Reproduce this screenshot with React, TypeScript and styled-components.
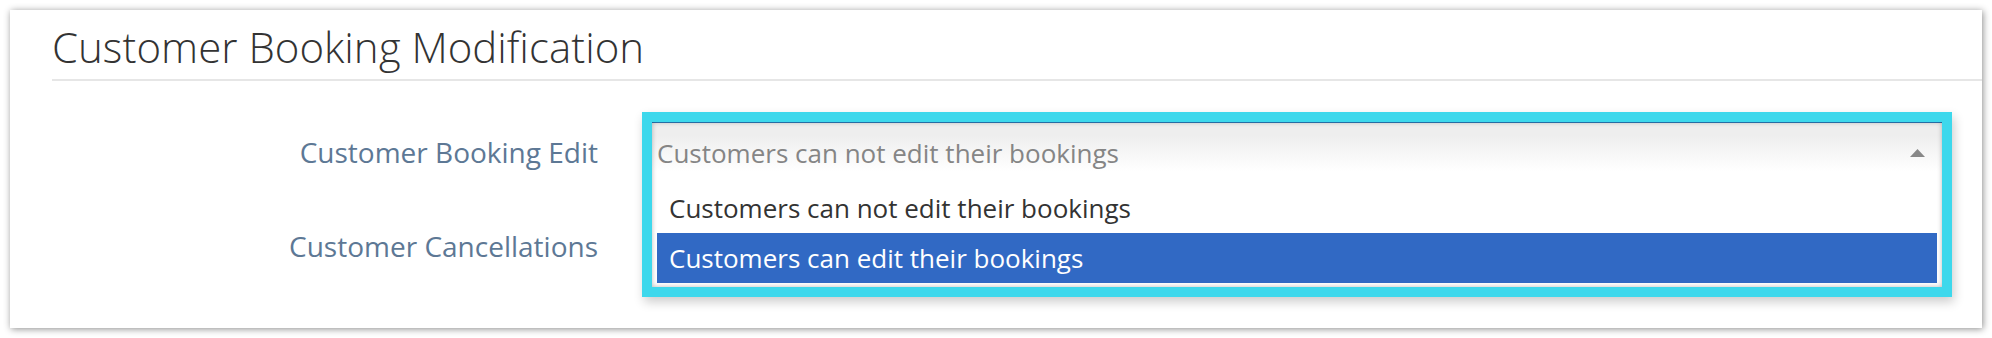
import React from "react";
import styled, { createGlobalStyle } from "styled-components";

const GlobalStyle = createGlobalStyle`
  html, body {
    margin: 0;
    padding: 0;
    background: #ffffff;
  }
  body {
    font-family: "Open Sans", "Liberation Sans", sans-serif;
  }
  * {
    box-sizing: border-box;
  }
`;

const Page = styled.div`
  padding: 10px;
  width: 1992px;
  height: 338px;
`;

const Card = styled.section`
  height: 318px;
  background: #ffffff;
  box-shadow: 1px 1px 7px rgba(0, 0, 0, 0.45);
`;

const Title = styled.h2`
  margin: 0 0 0 42px;
  padding: 14px 0 9px;
  font-family: "Open Sans Light", "Open Sans", "Liberation Sans", sans-serif;
  font-size: 42px;
  line-height: 46px;
  font-weight: 300;
  color: #333333;
  border-bottom: 2px solid #e6e6e6;
`;

const Form = styled.div`
  margin-top: 31px;
  padding-right: 30px;
`;

const Row = styled.div`
  display: grid;
  grid-template-columns: 588px 1fr;
  column-gap: 44px;
  min-height: 94px;
  align-items: start;
`;

const Label = styled.label`
  padding-top: 20px;
  font-size: 28px;
  line-height: 40px;
  color: #5d7895;
  text-align: right;
`;

const Field = styled.div`
  position: relative;
`;

const OpenSelect = styled.div`
  position: absolute;
  top: 0;
  left: 0;
  right: 0;
  z-index: 2;
  border: 10px solid #3dd8ec;
  background: #ffffff;
  box-shadow: 2px 5px 10px rgba(0, 0, 0, 0.2);
  &::after {
    content: "";
    position: absolute;
    inset: 0;
    pointer-events: none;
    box-shadow: inset 0 0 5px rgba(0, 0, 0, 0.28);
  }
`;

const SingleHeader = styled.div<{ $open?: boolean }>`
  display: flex;
  align-items: center;
  justify-content: space-between;
  min-height: 61px;
  padding: 15px 17px 15px 5px;
  border-top: 1px solid ${(p) => (p.$open ? "#2b7bb9" : "#aaaaaa")};
  background: linear-gradient(#eeeeee 20%, #ffffff 80%);
  font-size: 26px;
  line-height: 30px;
  color: #858585;
`;

const ClosedSelect = styled(SingleHeader)`
  margin: 10px;
  justify-content: flex-end;
  border: 1px solid #aaaaaa;
`;

const Results = styled.ul`
  list-style: none;
  margin: 0;
  padding: 0 5px 4px 5px;
`;

const Option = styled.li<{ $active?: boolean }>`
  padding: 10px 12px;
  font-size: 26px;
  line-height: 30px;
  color: ${(p) => (p.$active ? "#ffffff" : "#333333")};
  background: ${(p) => (p.$active ? "#3169c4" : "transparent")};
`;

const Caret = ({ up }: { up?: boolean }) => (
  <svg width="15" height="8" viewBox="0 0 15 8" aria-hidden="true">
    <polygon points={up ? "7.5,0 15,8 0,8" : "0,0 15,0 7.5,8"} fill="#888888" />
  </svg>
);

export default function App() {
  return (
    <>
      <GlobalStyle />
      <Page>
        <Card>
          <Title>Customer Booking Modification</Title>
          <Form>
            <Row>
              <Label>Customer Booking Edit</Label>
              <Field>
                <OpenSelect>
                  <SingleHeader $open>
                    <span>Customers can not edit their bookings</span>
                    <Caret up />
                  </SingleHeader>
                  <Results>
                    <Option>Customers can not edit their bookings</Option>
                    <Option $active>Customers can edit their bookings</Option>
                  </Results>
                </OpenSelect>
              </Field>
            </Row>
            <Row>
              <Label>Customer Cancellations</Label>
              <Field>
                <ClosedSelect>
                  <Caret />
                </ClosedSelect>
              </Field>
            </Row>
          </Form>
        </Card>
      </Page>
    </>
  );
}
